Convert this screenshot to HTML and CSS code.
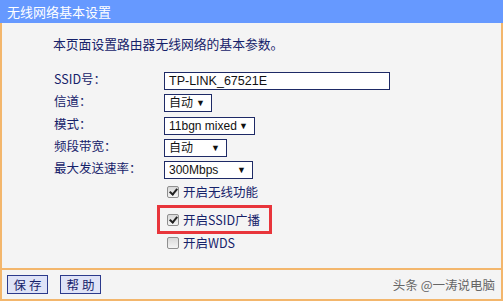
FILE: index.html
```html
<!DOCTYPE html>
<html lang="zh-CN">
<head>
    <meta charset="UTF-8">
    <title>无线网络基本设置</title>
    <link rel="stylesheet" href="styles.css">
</head>
<body>
    <div class="panel">
        <div class="titlebar">无线网络基本设置</div>
        <div class="content">
            <p class="intro">本页面设置路由器无线网络的基本参数。</p>
            <div class="form">
                <label>SSID号：</label>
                <div class="field"><span class="input">TP-LINK_67521E</span></div>
                <label>信道：</label>
                <div class="field"><span class="select w-ch">自动<i class="arrow">▼</i></span></div>
                <label>模式：</label>
                <div class="field"><span class="select w-mode">11bgn mixed<i class="arrow">▼</i></span></div>
                <label>频段带宽：</label>
                <div class="field"><span class="select w-bw">自动<i class="arrow">▼</i></span></div>
                <label>最大发送速率：</label>
                <div class="field"><span class="select w-rate">300Mbps<i class="arrow">▼</i></span></div>
            </div>
            <div class="checks">
                <div class="check"><span class="box checked"></span>开启无线功能</div>
                <div class="check highlight"><span class="box checked"></span>开启SSID广播</div>
                <div class="check"><span class="box"></span>开启WDS</div>
            </div>
        </div>
        <div class="footer">
            <button class="btn">保 存</button>
            <button class="btn">帮 助</button>
            <span class="mark">头条 @一涛说电脑</span>
        </div>
    </div>
</body>
</html>
```

FILE: styles.css
```css
body {
    margin: 0;
    background: #fff;
    font-family: "Noto Sans CJK SC", "Liberation Sans", sans-serif;
    color: #16226a;
}

.panel {
    width: 503px;
    height: 301px;
    background: #f4f4f4;
    box-sizing: border-box;
    border-left: 2px solid #f3b66c;
    border-right: 2px solid #f3b66c;
    display: flex;
    flex-direction: column;
}

.titlebar {
    height: 23px;
    margin: 0 -2px;
    background: #6699ff;
    color: #fff;
    font-size: 13px;
    line-height: 23px;
    padding-left: 7px;
}

.content {
    height: 245px;
}

.intro {
    margin: 12px 0 0 51px;
    font-size: 12.8px;
    line-height: 18px;
}

.form {
    display: grid;
    grid-template-columns: 110px auto;
    row-gap: 4.3px;
    margin: 17px 0 0 52px;
    font-size: 12.5px;
}

.form label {
    height: 18px;
    line-height: 18px;
}

.field {
    height: 18px;
}

.input,
.select {
    display: inline-block;
    box-sizing: border-box;
    height: 18px;
    border: 1px solid #1e2a66;
    background: #fff;
    color: #111;
    font-family: "Liberation Sans", "Noto Sans CJK SC", sans-serif;
    font-size: 12px;
    line-height: 16px;
    padding-left: 4px;
    position: relative;
    white-space: nowrap;
}

.input {
    width: 226px;
    font-size: 12.5px;
}

.arrow {
    font-style: normal;
    font-size: 9px;
    position: absolute;
    right: 6px;
    top: 0;
}

.w-ch { width: 48px; }
.w-mode { width: 91px; }
.w-bw { width: 63px; }
.w-rate { width: 89px; }

.checks {
    margin: 6px 0 0 165px;
    display: flex;
    flex-direction: column;
    font-size: 12.5px;
}

.check {
    height: 18px;
    line-height: 18px;
    display: flex;
    align-items: center;
    white-space: nowrap;
}

.check.highlight {
    box-sizing: border-box;
    width: 115px;
    height: 29px;
    margin: 4px 0 0 -10px;
    padding-left: 7px;
    border: 3px solid #e8353b;
}

.box {
    width: 10px;
    height: 10px;
    border: 1px solid #8f8f8f;
    border-radius: 2px;
    background: linear-gradient(#d8d8d8, #f4f4f4);
    margin-right: 4px;
    position: relative;
    flex: none;
}

.box.checked::after {
    content: "";
    position: absolute;
    left: 3px;
    top: 0;
    width: 3px;
    height: 6px;
    border: solid #222;
    border-width: 0 2px 2px 0;
    transform: rotate(40deg);
}

.footer {
    height: 29px;
    border-top: 2px solid #f3b66c;
    border-bottom: 2px solid #f3b66c;
    display: flex;
    align-items: center;
    padding-left: 5px;
    gap: 12px;
}

.btn {
    height: 19px;
    width: 41px;
    padding: 0;
    border: 1px solid #2c3a8c;
    background: #dfe3f7;
    color: #16226a;
    font-family: "Noto Sans CJK SC", sans-serif;
    font-size: 12.5px;
    line-height: 16px;
}

.mark {
    margin-left: auto;
    margin-right: 6px;
    color: #666;
    font-size: 12.5px;
}
```
